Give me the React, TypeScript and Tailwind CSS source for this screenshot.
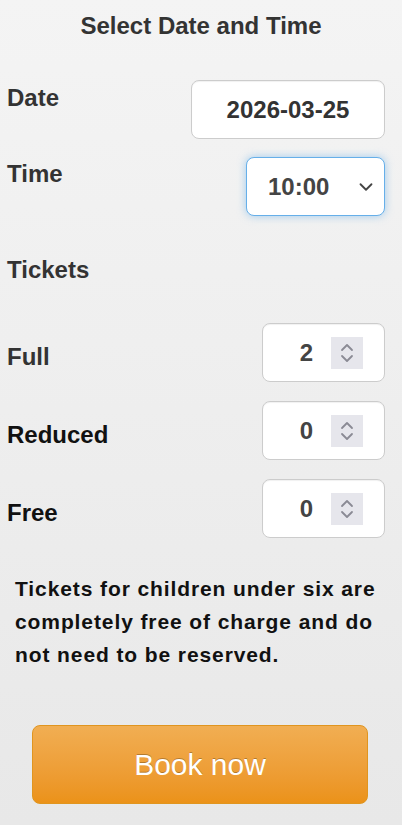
import { ChevronDown } from "lucide-react";

type TicketRowProps = {
  label: string;
  value: number;
  dark?: boolean;
};

function Spinner() {
  return (
    <div className="flex h-8 w-8 items-center justify-center bg-[#e6e6ec]">
      <svg width="14" height="24" viewBox="0 0 14 24" fill="none">
        <path
          d="M2 9 L7 4 L12 9"
          stroke="#8a8a94"
          strokeWidth="1.8"
          strokeLinecap="round"
          strokeLinejoin="round"
        />
        <path
          d="M2 15 L7 20 L12 15"
          stroke="#8a8a94"
          strokeWidth="1.8"
          strokeLinecap="round"
          strokeLinejoin="round"
        />
      </svg>
    </div>
  );
}

function TicketRow({ label, value, dark }: TicketRowProps) {
  return (
    <div className="flex h-[59px] items-center justify-between">
      <span
        className={`mt-2 pl-[7px] text-[24px] font-bold leading-[28px] ${
          dark ? "text-[#111]" : "text-[#333]"
        }`}
      >
        {label}
      </span>
      <div className="flex h-[59px] w-[123px] items-center justify-end rounded-lg border border-[#ccc] bg-white pr-[21px] shadow-[inset_0_1px_1px_rgba(0,0,0,0.06)]">
        <span className="mr-[18px] text-[24px] font-bold text-[#444]">
          {value}
        </span>
        <Spinner />
      </div>
    </div>
  );
}

export default function App() {
  return (
    <div
      className="min-h-[825px] w-[402px] bg-gradient-to-b from-[#f4f4f4] to-[#e8e8e8] pr-[17px]"
      style={{ fontFamily: '"Liberation Sans", Arial, sans-serif' }}
    >
      <h1 className="pt-3 text-center text-[24px] font-bold leading-[28px] text-[#333] pl-[17px]">
        Select Date and Time
      </h1>

      <div className="mt-10 flex items-start justify-between">
        <span className="mt-1 pl-[7px] text-[24px] font-bold leading-[28px] text-[#333]">
          Date
        </span>
        <div className="flex h-[59px] w-[194px] items-center justify-center rounded-lg border border-[#ccc] bg-white text-[24px] font-bold text-[#333] shadow-[inset_0_1px_1px_rgba(0,0,0,0.06)]">
          2026-03-25
        </div>
      </div>

      <div className="mt-[18px] flex items-start justify-between">
        <span className="mt-[3px] pl-[7px] text-[24px] font-bold leading-[28px] text-[#333]">
          Time
        </span>
        <div className="flex h-[59px] w-[139px] items-center rounded-lg border border-[#66afe9] bg-white pl-[21px] pr-[7px] shadow-[0_0_8px_rgba(102,175,233,0.6)]">
          <span className="flex-1 text-[24px] font-bold text-[#444]">10:00</span>
          <ChevronDown size={22} strokeWidth={2} color="#444" />
        </div>
      </div>

      <div className="mt-10 pl-[7px] text-[24px] font-bold leading-[28px] text-[#333]">
        Tickets
      </div>

      <div className="mt-[39px] flex flex-col gap-[19px]">
        <TicketRow label="Full" value={2} />
        <TicketRow label="Reduced" value={0} dark />
        <TicketRow label="Free" value={0} dark />
      </div>

      <p className="mt-[34px] pl-[15px] text-[21px] font-bold leading-[33px] tracking-[0.9px] text-[#111]">
        Tickets for children under six are completely free of charge and do
        not need to be reserved.
      </p>

      <div className="mt-[54px] pl-[32px] pr-[17px]">
        <button className="flex h-[79px] w-[336px] items-center justify-center rounded-lg border border-[#e0951f] bg-gradient-to-b from-[#f1ae52] to-[#eb9218] text-[30px] text-white [text-shadow:0_-1px_0_rgba(0,0,0,0.25)]">
          Book now
        </button>
      </div>
    </div>
  );
}
